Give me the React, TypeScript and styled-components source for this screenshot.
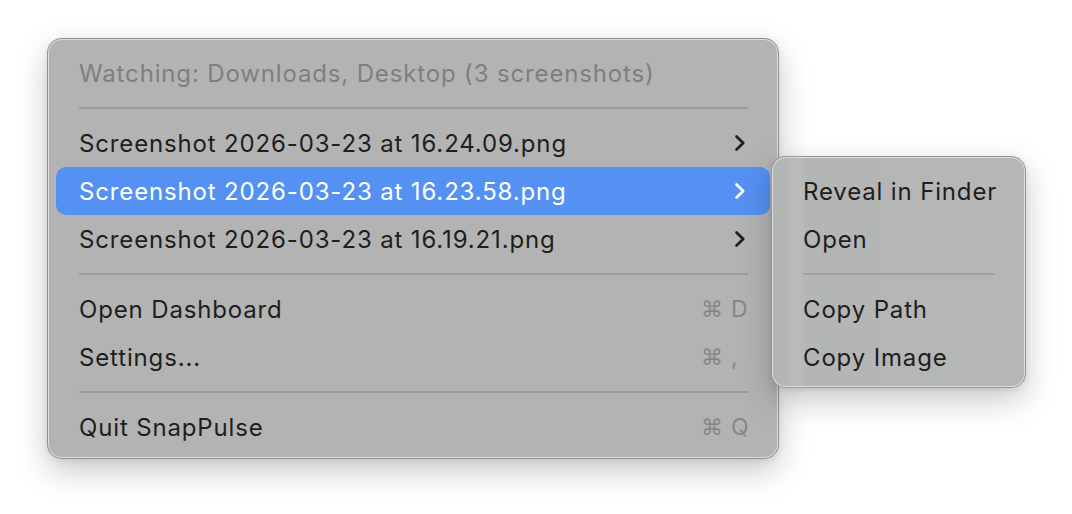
import React from "react";
import styled, { createGlobalStyle, css } from "styled-components";

const Global = createGlobalStyle`
  html, body { margin: 0; padding: 0; background: #ffffff; }
  body { font-family: Inter, "Noto Sans", "DejaVu Sans", sans-serif; -webkit-font-smoothing: antialiased; }
`;

const Page = styled.div`
  width: 1072px;
  height: 514px;
  padding: 38px 0 0 47px;
  box-sizing: border-box;
`;

const menuSurface = css`
  box-sizing: border-box;
  border-radius: 15px;
  border: 1px solid rgba(0, 0, 0, 0.18);
  box-shadow: inset 0 0 0 1px rgba(255, 255, 255, 0.55), 0 12px 32px rgba(0, 0, 0, 0.22),
    0 2px 6px rgba(0, 0, 0, 0.08);
  display: flex;
  flex-direction: column;
`;

const Menu = styled.div`
  ${menuSurface};
  width: 732px;
  height: 421px;
  padding: 10px 8px 7px;
  background: #b3b3b3;
`;

const SubMenu = styled.div`
  ${menuSurface};
  position: absolute;
  left: 715px;
  top: -11px;
  width: 255px;
  height: 232px;
  padding: 10px 8px 6px;
  background: linear-gradient(
    90deg,
    #b2b3b3 0%,
    #b5b6b6 6%,
    #bbbcbc 10%,
    #b4b5b5 14%,
    #b5b6b6 100%
  );
  z-index: 2;
`;

const Row = styled.div<{ $active?: boolean; $muted?: boolean }>`
  position: relative;
  height: 48px;
  flex: none;
  display: flex;
  align-items: center;
  padding: 0 24px 0 23px;
  border-radius: 10px;
  font-size: 24px;
  letter-spacing: 0.85px;
  color: ${(p) => (p.$muted ? "#7f7f7f" : p.$active ? "#ffffff" : "#1e1e1e")};
  background: ${(p) => (p.$active ? "#5591f2" : "transparent")};
`;

const Label = styled.span`
  flex: 1;
  white-space: nowrap;
`;

const Shortcut = styled.span`
  display: inline-flex;
  align-items: center;
  color: #878787;
  font-size: 23px;
  letter-spacing: 0;
  white-space: nowrap;
  margin-right: -3px;
`;

const Cmd = styled.span`
  font-family: "DejaVu Sans", sans-serif;
  font-size: 22px;
  margin-right: 8px;
`;

const Key = styled.span`
  min-width: 18px;
`;

const Separator = styled.div`
  flex: none;
  height: 22px;
  display: flex;
  align-items: center;
  padding: 0 22px 0 23px;
  &::after {
    content: "";
    flex: 1;
    height: 2px;
    background: rgba(0, 0, 0, 0.12);
  }
`;

const Chevron = ({ color }: { color: string }) => (
  <svg width="12" height="18" viewBox="0 0 12 18" fill="none">
    <polyline
      points="2.5,2.5 9.2,9 2.5,15.5"
      stroke={color}
      strokeWidth="2.7"
      strokeLinecap="round"
      strokeLinejoin="round"
    />
  </svg>
);

const files = [
  "Screenshot 2026-03-23 at 16.24.09.png",
  "Screenshot 2026-03-23 at 16.23.58.png",
  "Screenshot 2026-03-23 at 16.19.21.png",
];

const actions = [
  { label: "Open Dashboard", key: "D" },
  { label: "Settings...", key: "," },
];

export default function App() {
  return (
    <>
      <Global />
      <Page>
        <Menu>
          <Row $muted>
            <Label>Watching: Downloads, Desktop (3 screenshots)</Label>
          </Row>
          <Separator />
          {files.map((f, i) => (
            <Row key={f} $active={i === 1}>
              <Label>{f}</Label>
              <Chevron color={i === 1 ? "#ffffff" : "#1e1e1e"} />
              {i === 1 && (
                <SubMenu>
                  <Row>
                    <Label>Reveal in Finder</Label>
                  </Row>
                  <Row>
                    <Label>Open</Label>
                  </Row>
                  <Separator />
                  <Row>
                    <Label>Copy Path</Label>
                  </Row>
                  <Row>
                    <Label>Copy Image</Label>
                  </Row>
                </SubMenu>
              )}
            </Row>
          ))}
          <Separator />
          {actions.map((a) => (
            <Row key={a.label}>
              <Label>{a.label}</Label>
              <Shortcut>
                <Cmd>⌘</Cmd>
                <Key>{a.key}</Key>
              </Shortcut>
            </Row>
          ))}
          <Separator />
          <Row>
            <Label>Quit SnapPulse</Label>
            <Shortcut>
              <Cmd>⌘</Cmd>
              <Key>Q</Key>
            </Shortcut>
          </Row>
        </Menu>
      </Page>
    </>
  );
}
